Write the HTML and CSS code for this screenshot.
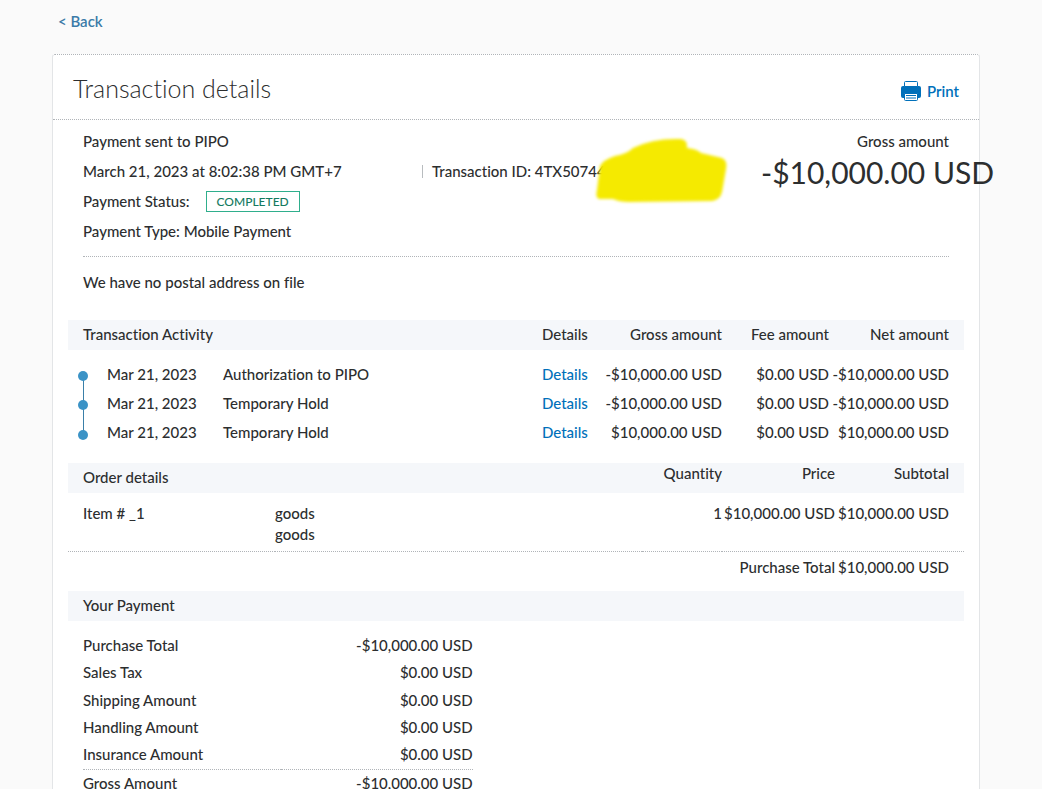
FILE: index.html
```html
<!DOCTYPE html>
<html lang="en">
<head>
<meta charset="utf-8">
<title>Transaction details</title>
<link rel="stylesheet" href="styles.css">
</head>
<body>
<nav class="topbar"><a class="back" href="#">&lt; Back</a></nav>
<main class="card">
  <header class="card-header">
    <h1 class="title">Transaction details</h1>
    <button class="print" type="button">
      <svg width="20" height="20" viewBox="0 0 20 20" aria-hidden="true">
        <path fill="#0070ba" d="M2 5h16a2 2 0 0 1 2 2v8a2 2 0 0 1-2 2H2a2 2 0 0 1-2-2V7a2 2 0 0 1 2-2z"/>
        <path fill="#fff" stroke="#0070ba" d="M3.500 5.500V1.500a1 1 0 0 1 1-1h11a1 1 0 0 1 1 1v4z"/>
        <path fill="#fff" stroke="#0070ba" d="M3.500 12.500h13v6a1 1 0 0 1-1 1h-11a1 1 0 0 1-1-1z"/>
        <path stroke="#0070ba" d="M5 14.500h10M5 17h10"/>
      </svg>
      Print
    </button>
  </header>
  <section class="summary">
    <div class="facts">
      <p>Payment sent to PIPO</p>
      <div class="when">
        <span>March 21, 2023 at 8:02:38 PM GMT+7</span>
        <span class="txn">Transaction ID: 4TX50744
          <svg class="marker" width="140" height="74" viewBox="0 0 140 74" aria-hidden="true">
            <defs>
              <filter id="soft"><feGaussianBlur stdDeviation="1.600"/></filter>
            </defs>
            <path fill="#f5ea00" filter="url(#soft)" d="M9 32Q12 26 24 22Q36 20 42 14Q62 4 90 5Q97 6 96 14Q106 15 110 19L131 24Q137 27 135 35L131 58Q129 66 121 67L38 68Q28 68 22 65L8 65Q4 63 6 56Z"/>
          </svg>
        </span>
      </div>
      <p class="status">Payment Status: <span class="badge">COMPLETED</span></p>
      <p>Payment Type: Mobile Payment</p>
    </div>
    <div class="gross">
      <p class="gross-label">Gross amount</p>
      <p class="gross-value">-$10,000.00 USD</p>
    </div>
  </section>
  <p class="address">We have no postal address on file</p>

  <table class="grid activity">
    <colgroup><col class="c-dot"><col class="c-date"><col><col class="c-details"><col class="c-gross"><col class="c-fee"><col class="c-net"></colgroup>
    <thead>
      <tr><th class="first" colspan="3">Transaction Activity</th><th>Details</th><th class="num">Gross amount</th><th class="num">Fee amount</th><th class="num last">Net amount</th></tr>
    </thead>
    <tbody>
      <tr><td><svg class="dot" width="39" height="29"><path stroke="#3a7fa8" d="M15.500 16V29"/><circle cx="15" cy="16" r="5" fill="#3b93c6"/></svg></td><td>Mar 21, 2023</td><td>Authorization to PIPO</td><td><a href="#">Details</a></td><td class="num">-$10,000.00 USD</td><td class="num">$0.00 USD</td><td class="num last">-$10,000.00 USD</td></tr>
      <tr><td><svg class="dot" width="39" height="29"><path stroke="#3a7fa8" d="M15.500 0V29"/><circle cx="15" cy="16" r="5" fill="#3b93c6"/></svg></td><td>Mar 21, 2023</td><td>Temporary Hold</td><td><a href="#">Details</a></td><td class="num">-$10,000.00 USD</td><td class="num">$0.00 USD</td><td class="num last">-$10,000.00 USD</td></tr>
      <tr><td><svg class="dot" width="39" height="29"><path stroke="#3a7fa8" d="M15.500 0V16"/><circle cx="15" cy="17" r="5" fill="#3b93c6"/></svg></td><td>Mar 21, 2023</td><td>Temporary Hold</td><td><a href="#">Details</a></td><td class="num">$10,000.00 USD</td><td class="num">$0.00 USD</td><td class="num last">$10,000.00 USD</td></tr>
    </tbody>
  </table>

  <table class="grid order">
    <colgroup><col class="c-item"><col><col class="c-qty"><col class="c-price"><col class="c-sub"></colgroup>
    <thead>
      <tr><th class="first" colspan="2">Order details</th><th class="num raised">Quantity</th><th class="num raised">Price</th><th class="num last raised">Subtotal</th></tr>
    </thead>
    <tbody>
      <tr><td class="first">Item # _1</td><td>goods<br>goods</td><td class="num">1</td><td class="num">$10,000.00 USD</td><td class="num last">$10,000.00 USD</td></tr>
    </tbody>
    <tfoot>
      <tr><td class="num" colspan="4">Purchase Total</td><td class="num last">$10,000.00 USD</td></tr>
    </tfoot>
  </table>

  <h2 class="band">Your Payment</h2>
  <div class="payment-wrap">
    <table class="payment">
      <tbody>
        <tr><td>Purchase Total</td><td class="num">-$10,000.00 USD</td></tr>
        <tr><td>Sales Tax</td><td class="num">$0.00 USD</td></tr>
        <tr><td>Shipping Amount</td><td class="num">$0.00 USD</td></tr>
        <tr><td>Handling Amount</td><td class="num">$0.00 USD</td></tr>
        <tr><td>Insurance Amount</td><td class="num">$0.00 USD</td></tr>
      </tbody>
      <tfoot>
        <tr><td>Gross Amount</td><td class="num">-$10,000.00 USD</td></tr>
      </tfoot>
    </table>
  </div>
</main>
</body>
</html>
```
FILE: styles.css
```css
* { box-sizing: border-box; }
html { overflow: hidden; height: 100%; }
body {
  margin: 0;
  height: 100%;
  overflow: hidden;
  padding: 0 62px 0 52px;
  background: #fafafa;
  color: #2c2e2f;
  font: 500 15px/21px Lato, "Noto Sans", sans-serif;
  font-variant-ligatures: none;
}
p, h1, h2 { margin: 0; font-weight: inherit; }
a { color: #0070ba; text-decoration: none; }
.topbar { height: 54px; padding: 11px 6px; }
.back { color: #3b7ba8; font-weight: 600; }
.card {
  background: #fff;
  border: 1px solid #e3e5e7;
  border-top: 1px dotted #b0b4b8;
  border-bottom: 0;
  border-radius: 3px 3px 0 0;
  padding: 0 15px 30px;
}
.card-header {
  display: flex;
  justify-content: space-between;
  align-items: center;
  height: 65px;
  margin: 0 -15px;
  padding: 2px 20px 0;
  border-bottom: 1px dotted #b0b4b8;
}
.title { font-size: 25px; line-height: 32px; font-weight: 300; }
.print {
  display: flex;
  align-items: center;
  gap: 6px;
  margin-top: 6px;
  padding: 0;
  border: 0;
  background: none;
  color: #0070ba;
  font: inherit;
  font-weight: 600;
  cursor: pointer;
}
.summary {
  display: flex;
  justify-content: space-between;
  margin: 0 15px;
  padding: 6px 0 10px;
  border-bottom: 1px dotted #b0b4b8;
  line-height: 30px;
}
.facts { flex: 1; }
.when { display: flex; }
.when > span:first-child { width: 50%; }
.txn { position: relative; white-space: nowrap; }
.txn::before {
  content: "";
  display: inline-block;
  width: 1px;
  height: 13px;
  margin-right: 9px;
  background: #b8bcbf;
  vertical-align: -1px;
}
.marker { position: absolute; right: -125px; top: -22px; }
.status { display: flex; align-items: center; gap: 16px; }
.badge {
  padding: 0 10px;
  border: 1px solid #2fae8c;
  color: #147a5f;
  font-size: 12px;
  line-height: 19px;
}
.gross { width: 188px; white-space: nowrap; }
.gross-label { text-align: right; }
.gross-value { font-size: 30px; line-height: 32px; font-weight: 400; }
.address { margin: 0 15px; padding: 15px 0 27px; }

.grid { width: 100%; table-layout: fixed; border-collapse: collapse; }
.grid th, .grid td { padding: 0; text-align: left; font-weight: inherit; white-space: nowrap; }
.grid th, .band { height: 30px; background: #f5f7fa; }
.grid th { padding-bottom: 2px; }
.grid .num, .payment .num { text-align: right; }
.grid .first { padding-left: 15px; }
.grid .last { padding-right: 15px; }
.c-dot { width: 39px; }
.c-date { width: 116px; }
.c-details { width: 60px; }
.c-gross { width: 120px; }
.c-fee { width: 107px; }
.c-net { width: 135px; }
.activity { margin-bottom: 16px; }
.activity tbody::before { content: ""; display: block; height: 10px; }
.activity td { height: 29px; }
.dot { display: block; }
.c-item { width: 207px; }
.c-qty { width: 80px; }
.c-price { width: 113px; }
.c-sub { width: 129px; }
.order .raised { padding-bottom: 9px; }
.order tbody td { padding-top: 10px; padding-bottom: 6px; vertical-align: top; border-bottom: 1px dotted #b0b4b8; }
.order tfoot td { padding-top: 5px; padding-bottom: 13px; }
.band { padding: 0 15px; font-size: 15px; line-height: 28px; }
.payment-wrap { padding: 10px 15px 0; }
.payment { width: 45%; border-collapse: collapse; }
.payment td { height: 27px; padding: 0; white-space: nowrap; }
.payment tr:nth-child(odd) td { height: 28px; }
.payment tfoot td { border-top: 1px dotted #b0b4b8; }
```
